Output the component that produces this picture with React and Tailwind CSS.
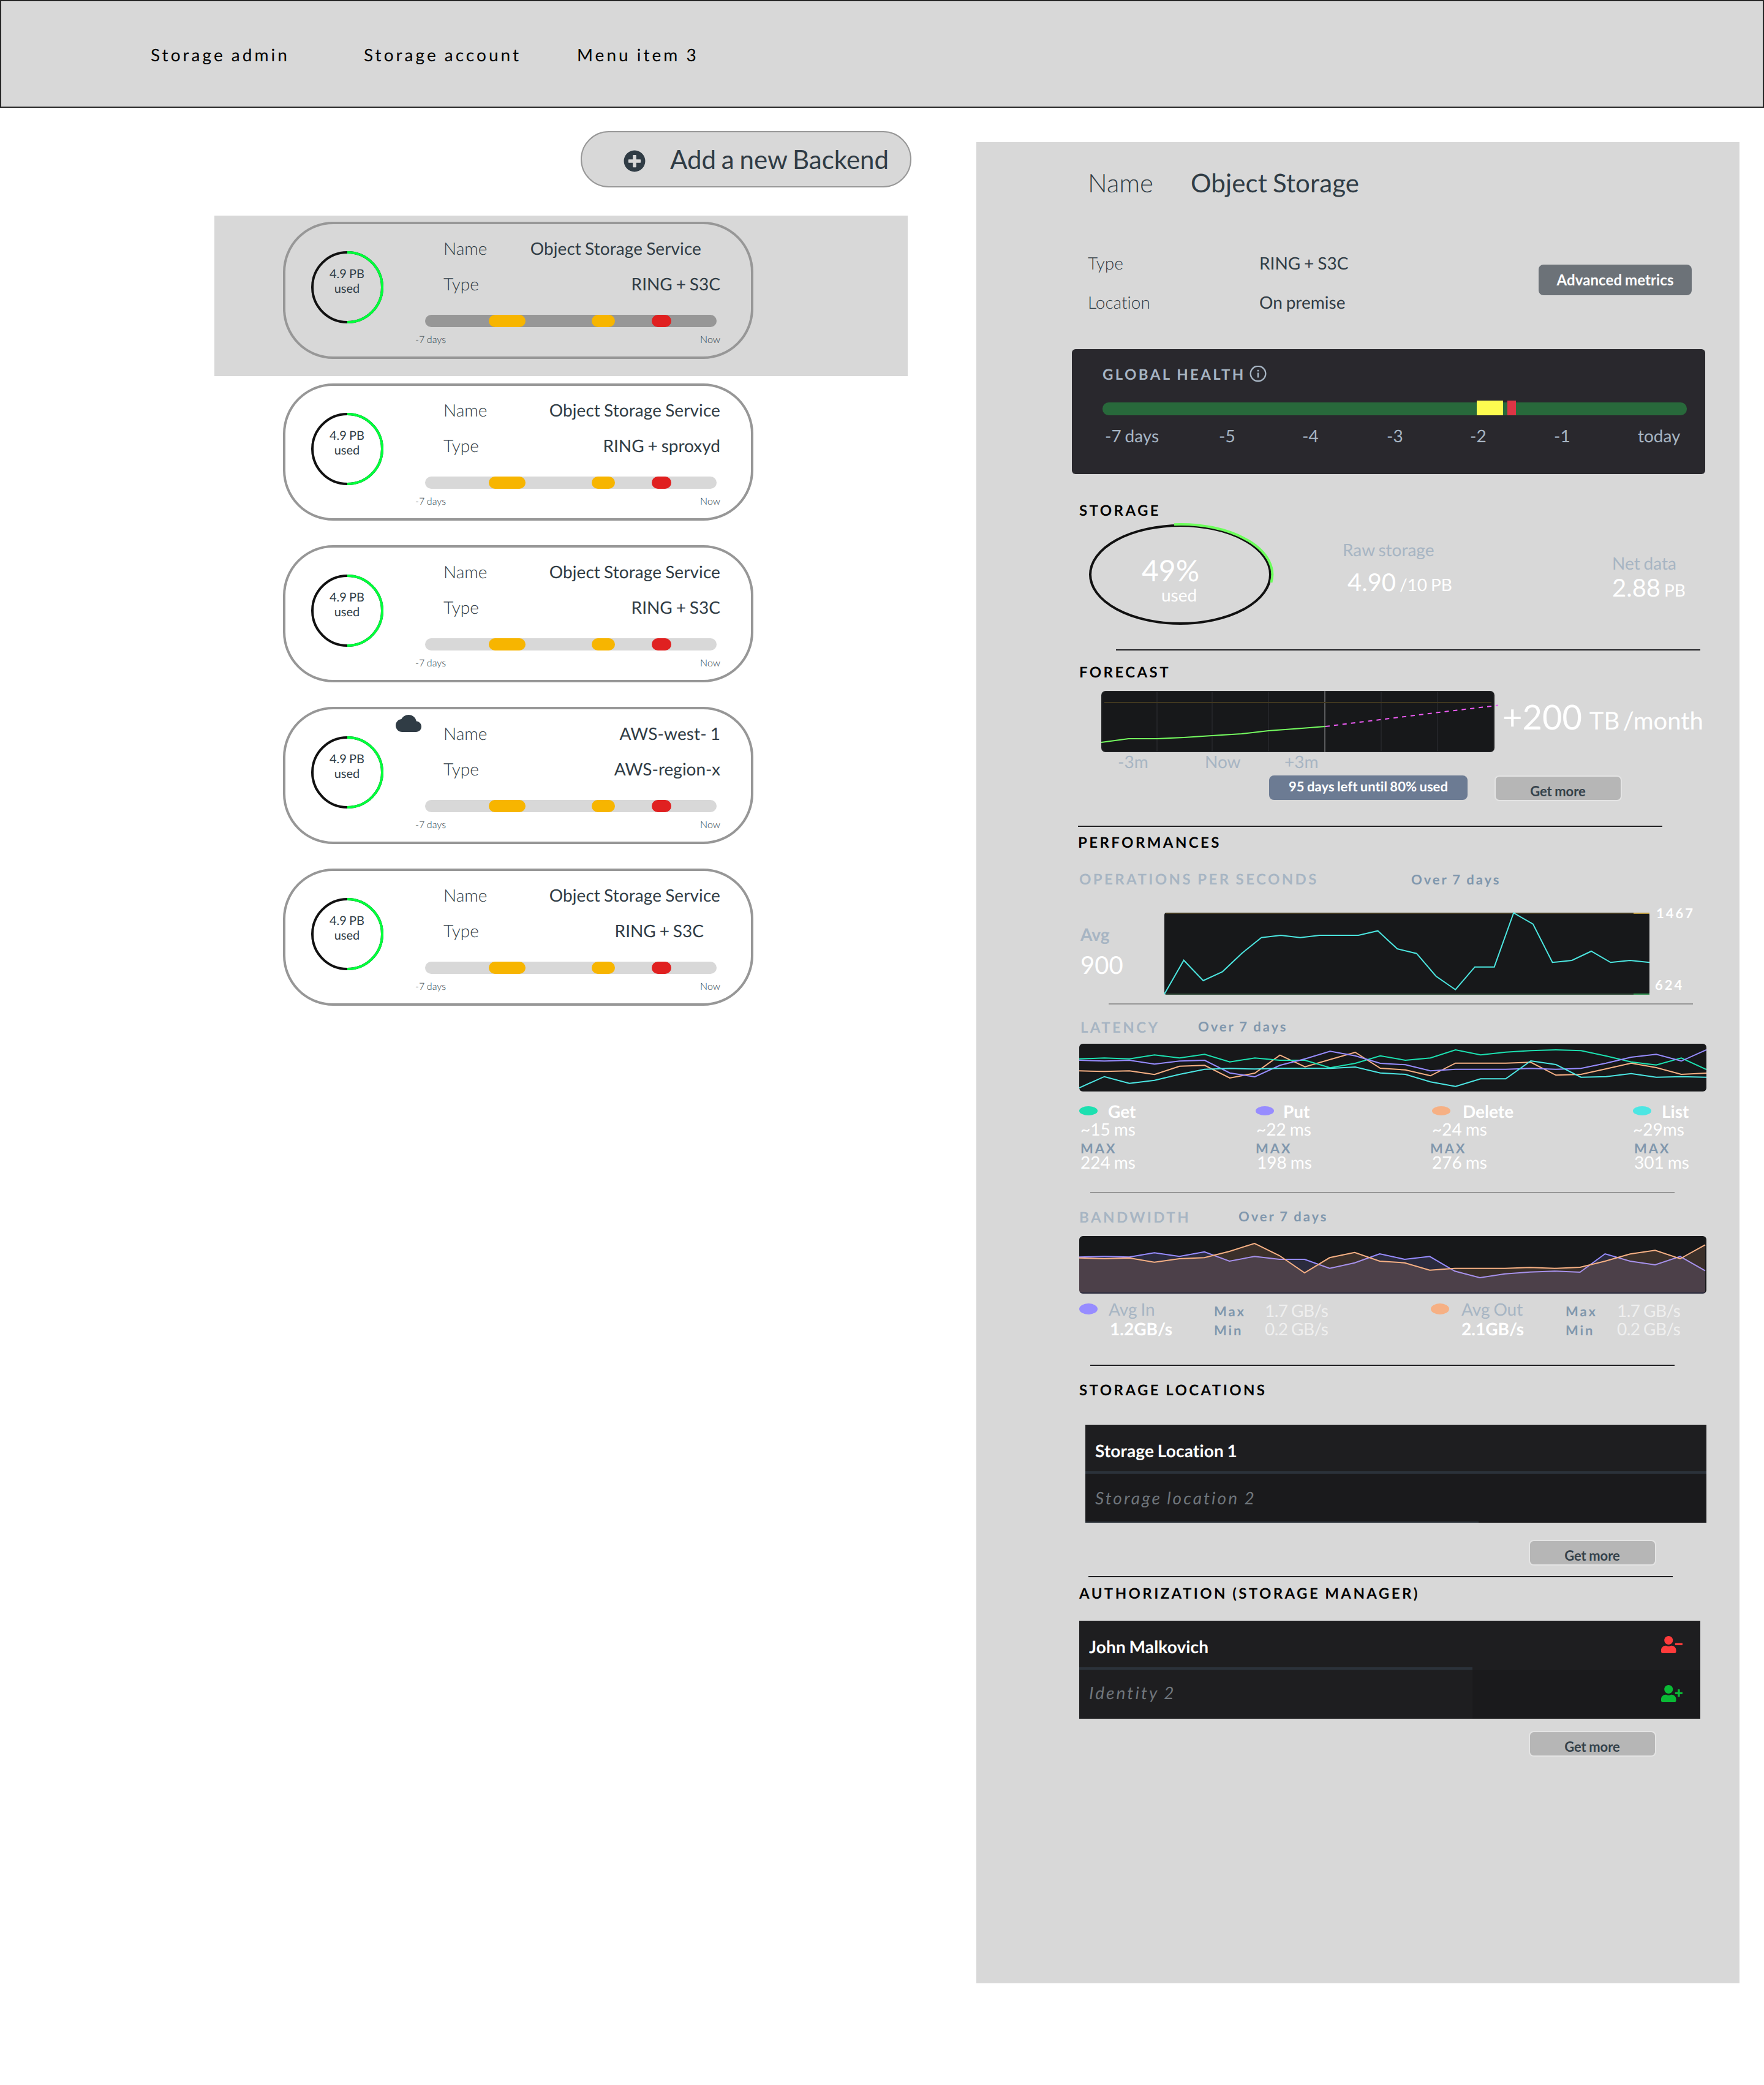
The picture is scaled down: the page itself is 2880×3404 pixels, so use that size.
import React from "react";
import { FaPlusCircle, FaUserMinus, FaUserPlus } from "react-icons/fa";

const cx = (...parts) => parts.filter(Boolean).join(" ");

/* Single line of text, never wraps or shrinks inside a flex row. */
function T({ className, children }) {
  return <div className={cx("shrink-0 whitespace-nowrap [word-spacing:-0.045em]", className)}>{children}</div>;
}

const BODY = "text-[28px] leading-[34px]";
const HEADING = "-mb-[2px] text-[24px] leading-[30px] font-bold tracking-[3.4px] text-black";
const SUBHEADING = "-mb-[2px] text-[24px] leading-[30px] font-bold tracking-[3.4px] text-[#a7b5c3]";
const PERIOD = "text-[22px] leading-[26px] font-bold tracking-[2.9px] text-[#8097ad]";

function Header() {
  return (
    <header className="flex h-[176px] border-2 border-[#262626] bg-[#d8d8d8] pl-[244px] pt-[70px] text-[28px] leading-[34px] tracking-[4.05px] text-black">
      <T className="w-[348px]">Storage admin</T>
      <T className="w-[348px]">Storage account</T>
      <T>Menu item 3</T>
    </header>
  );
}

function UsageRing() {
  return (
    <div className="ml-[40px] mt-[42px] grid h-[122px] w-[122px] shrink-0">
      <svg className="[grid-area:1/1]" width="122" height="122" viewBox="0 0 122 122" fill="none">
        <circle cx="61" cy="61" r="57" stroke="#111111" strokeWidth="4" />
        <path d="M61 4A57 57 0 0 1 61 118" stroke="#00ff3c" strokeWidth="4" />
      </svg>
      <div className="pr-px pt-[27px] text-center text-[20px] leading-[24px] [grid-area:1/1]">
        <T>4.9 PB</T>
        <T>used</T>
      </div>
    </div>
  );
}

function HealthBar({ selected }) {
  const track = selected ? "bg-[#979797]" : "bg-[#d8d8d8]";
  return (
    <div className={cx("flex h-[20px] w-[476px] rounded-[10px]", track)}>
      <div className="ml-[104px] w-[60px] rounded-[10px] bg-[#f7b500]" />
      <div className="ml-[108px] w-[38px] rounded-[10px] bg-[#f7b500]" />
      <div className="ml-[60px] w-[32px] rounded-[10px] bg-[#e02020]" />
    </div>
  );
}

function BackendCard({ name, type, selected, cloud, nameShift, typeShift }) {
  return (
    <div className="flex h-[224px] w-[768px] rounded-[82px] border-4 border-[#979797] text-[#303c45]">
      <UsageRing />
      <div className="flex w-[34px] shrink-0 pl-[18px] pt-[9px]">
        {cloud && (
          <svg className="shrink-0" width="42" height="28" viewBox="0 4 24 16" fill="#303c45">
            <path d="M19.35 10.04C18.67 6.59 15.64 4 12 4 9.11 4 6.6 5.64 5.35 8.04 2.34 8.36 0 10.91 0 14c0 3.31 2.69 6 6 6h13c2.76 0 5-2.24 5-5 0-2.64-2.05-4.78-4.65-4.96z" />
          </svg>
        )}
      </div>
      <div className="ml-[16px] w-[498px] shrink-0 pt-[22px]">
        <div className={cx("flex justify-between pl-[46px]", BODY)}>
          <T className="font-light">Name</T>
          <T className={cx("tracking-[0.1px]", nameShift && "pr-[31px]")}>{name}</T>
        </div>
        <div className={cx("mt-[24px] flex justify-between pl-[46px]", BODY)}>
          <T className="font-light">Type</T>
          <T className={typeShift ? "pr-[27px]" : ""}>{type}</T>
        </div>
        <div className="mt-[34px] pl-[16px]">
          <HealthBar selected={selected} />
        </div>
        <div className="mt-[11px] flex justify-between text-[16px] font-light leading-[20px]">
          <T>-7 days</T>
          <T>Now</T>
        </div>
      </div>
    </div>
  );
}

function BackendList() {
  return (
    <section className="w-[1132px] shrink-0 pt-[38px]">
      <button className="ml-[598px] flex h-[92px] w-[540px] rounded-full border-2 border-[#979797] bg-[#d8d8d8] pt-[20px] text-[42px] leading-[48px] text-[#303c45]">
        <FaPlusCircle className="ml-[68px] mt-[9px] h-[36px] w-[36px] shrink-0" />
        <T className="ml-[40px]">Add a new Backend</T>
      </button>
      <div className="mt-[46px] h-[262px] bg-[#d8d8d8] pl-[112px] pt-[10px]">
        <BackendCard name="Object Storage Service" type="RING + S3C" selected nameShift />
      </div>
      <div className="mt-[12px] flex flex-col gap-[40px] pl-[112px]">
        <BackendCard name="Object Storage Service" type="RING + sproxyd" />
        <BackendCard name="Object Storage Service" type="RING + S3C" />
        <BackendCard name="AWS-west- 1" type="AWS-region-x" cloud />
        <BackendCard name="Object Storage Service" type="RING + S3C" typeShift />
      </div>
    </section>
  );
}

function GetMore({ className }) {
  return (
    <button
      className={cx(
        "flex h-[42px] w-[208px] justify-center rounded-[8px] border-2 border-[#e4e4e4] bg-[#b6b6b6] pr-px pt-[11px] text-[22px] font-bold leading-[26px] text-[#35424b]",
        className
      )}
    >
      <T>Get more</T>
    </button>
  );
}

function Identity() {
  return (
    <>
      <div className="flex pl-[182px] pt-[42px] text-[42px] leading-[48px] text-[#303c45]">
        <T className="w-[168px] font-light">Name</T>
        <T className="tracking-[0.15px]">Object Storage</T>
      </div>
      <div className="mt-[90px] flex h-[98px] pl-[182px] text-[#303c45]">
        <div className={cx("grid w-[736px] shrink-0 grid-cols-[280px_1fr] grid-rows-[34px_34px] gap-y-[30px]", BODY)}>
          <T className="font-light">Type</T>
          <T>RING + S3C</T>
          <T className="font-light">Location</T>
          <T>On premise</T>
        </div>
        <button className="mt-[20px] flex h-[50px] w-[250px] justify-center rounded-[8px] bg-[#6c7278] pt-[11px] text-[24px] font-bold leading-[28px] text-white">
          <T className="tracking-[0.1px]">Advanced metrics</T>
        </button>
      </div>
    </>
  );
}

function GlobalHealth() {
  return (
    <div className="ml-[156px] mt-[60px] h-[204px] w-[1034px] rounded-[6px] bg-[#29282d] pl-[50px] pt-[27px] text-[#a7b5c3]">
      <div className="flex h-[28px]">
        <T className={cx("w-[240px]", SUBHEADING)}>GLOBAL HEALTH</T>
        <svg className="shrink-0" width="28" height="28" viewBox="0 0 28 28" fill="none" stroke="#a7b5c3">
          <circle cx="14" cy="13" r="12.3" strokeWidth="2.4" />
          <path d="M14 11.5v8" strokeWidth="2.4" />
          <path d="M14 6.8v2.6" strokeWidth="2.6" />
        </svg>
      </div>
      <div className="mt-[29px] flex h-[24px] items-end">
        <div className="h-[21px] w-[611px] rounded-l-[10px] bg-[#28693b]" />
        <div className="h-[24px] w-[43px] bg-[#fdfb50]" />
        <div className="h-[21px] w-[7px] bg-[#28693b]" />
        <div className="h-[24px] w-[14px] bg-[#dc3545]" />
        <div className="h-[21px] w-[279px] rounded-r-[10px] bg-[#28693b]" />
      </div>
      <div className={cx("mt-[16px] flex pl-[4px]", BODY)}>
        <T className="w-[186px]">-7 days</T>
        <T className="w-[136px]">-5</T>
        <T className="w-[138px]">-4</T>
        <T className="w-[136px]">-3</T>
        <T className="w-[137px]">-2</T>
        <T className="w-[137px]">-1</T>
        <T>today</T>
      </div>
    </div>
  );
}

function Storage() {
  return (
    <>
      <T className={cx("ml-[168px] mt-[45px]", HEADING)}>STORAGE</T>
      <div className="ml-[182px] mt-[3px] flex h-[172px] text-white">
        <div className="grid w-[306px] shrink-0">
          <svg className="[grid-area:1/1]" width="306" height="172" viewBox="0 0 306 172" fill="none" strokeWidth="4">
            <ellipse cx="151" cy="88" rx="147" ry="80" stroke="#111111" />
            <path d="M141 6.2A149.5 82 0 0 1 299.4 101" stroke="#6dff5c" />
          </svg>
          <div className="pt-[53px] [grid-area:1/1]">
            <T className="pl-[88px] text-[48px] leading-[58px]">49%</T>
            <T className={cx("-mt-[7px] pl-[120px]", BODY)}>used</T>
          </div>
        </div>
        <div className="ml-[110px] w-[440px] shrink-0 pt-[30px]">
          <T className={cx("text-[#a7b5c3]", BODY)}>Raw storage</T>
          <T className="ml-[8px] mt-[12px] text-[40px] leading-[48px]">
            4.90<span className="text-[28px] [word-spacing:-0.045em]"> /10 PB</span>
          </T>
        </div>
        <div className="pt-[52px]">
          <T className={cx("text-[#a7b5c3]", BODY)}>Net data</T>
          <T className="-mt-px text-[40px] leading-[48px]">
            2.88<span className="text-[28px] [word-spacing:-0.045em]"> PB</span>
          </T>
        </div>
      </div>
      <div className="ml-[228px] mt-[38px] h-[2px] w-[954px] bg-[#202023]" />
    </>
  );
}

function Forecast() {
  return (
    <>
      <T className={cx("ml-[168px] mt-[21px]", HEADING)}>FORECAST</T>
      <div className="ml-[204px] mt-[17px] flex h-[100px]">
        <svg className="shrink-0 overflow-visible" width="642" height="100" viewBox="0 0 642 100" fill="none">
          <rect x="1" y="1" width="640" height="98" rx="6" fill="#17181a" stroke="#1f2022" strokeWidth="2" />
          <path d="M91 1v98M181 1v98M273 1v98M457 1v98M549 1v98" stroke="#232427" strokeWidth="2" />
          <path d="M365 0v100" stroke="#5b5c5e" strokeWidth="2" />
          <path d="M5 19H637" stroke="#40371f" strokeWidth="2" />
          <path d="M0 84 44.6 78 91 78 135 76 181 73 229 70 273 65 321 61.5 366 58" stroke="#75fb60" strokeWidth="2" />
          <path d="M366 58 457 46.7 549 35.3 648 23.6" stroke="#ee5cf5" strokeWidth="2" strokeDasharray="7 7" />
        </svg>
        <T className="ml-[13px] pt-[8px] text-[56px] leading-[68px] text-white">
          +200<span className="text-[40px] [word-spacing:0.07em]"> TB</span>
          <span className="text-[40px] [word-spacing:-0.12em]"> /month</span>
        </T>
      </div>
      <div className={cx("-mt-[2px] ml-[231px] flex text-[#a7b5c3]", BODY)}>
        <T className="w-[142px]">-3m</T>
        <T className="w-[130px]">Now</T>
        <T>+3m</T>
      </div>
      <div className="ml-[478px] mt-[6px] flex h-[42px]">
        <div className="flex h-[40px] w-[324px] justify-center rounded-[8px] bg-[#6c7b93] pt-[5px] text-[22px] font-bold leading-[26px] text-white">
          <T className="tracking-[0.05px]">95 days left until 80% used</T>
        </div>
        <GetMore className="ml-[44px]" />
      </div>
      <div className="ml-[166px] mt-[40px] h-[2px] w-[954px] bg-[#202023]" />
    </>
  );
}

const toPoints = (values, width) =>
  values.map((v, i) => `${((i * width) / (values.length - 1)).toFixed(1)},${v}`).join(" ");

const OPS = [
  133, 77.7, 111, 96.3, 66.3, 40.7, 37, 40.7, 37, 37, 37, 29.7, 59, 66.7, 103.7, 125.7, 88.7, 88.7, 0.5, 18.7, 81.3, 78,
  63, 81.3, 78, 81.3,
];

function Operations() {
  return (
    <>
      <T className={cx("ml-[166px] mt-[11px]", HEADING)}>PERFORMANCES</T>
      <div className="ml-[168px] mt-[32px] flex h-[28px]">
        <T className={cx("w-[542px]", SUBHEADING)}>OPERATIONS PER SECONDS</T>
        <T className={cx("pt-[2px]", PERIOD)}>Over 7 days</T>
      </div>
      <div className="ml-[170px] mt-[41px] flex h-[134px]">
        <div className="w-[137px] shrink-0 pt-[18px]">
          <T className={cx("font-bold text-[#a7b5c3]", BODY)}>Avg</T>
          <T className="mt-[9px] text-[40px] leading-[48px] text-white">900</T>
        </div>
        <svg className="shrink-0 overflow-visible" width="792" height="134" viewBox="0 0 792 134" fill="none">
          <rect width="792" height="134" rx="4" fill="#17181a" />
          <path d="M2 1H766" stroke="#40371f" strokeWidth="2" />
          <path d="M766 1H792" stroke="#b8963a" strokeWidth="2" />
          <path d="M2 133H766" stroke="#2c4434" strokeWidth="2" />
          <path d="M766 133H792" stroke="#2f8f4e" strokeWidth="2" />
          <polyline points={toPoints(OPS, 792)} stroke="#4ce6e0" strokeWidth="2" />
        </svg>
        <div className="-mt-[12px] ml-[9px] text-[22px] font-bold leading-[26px] tracking-[3px] text-white">
          <T className="ml-[2px]">1467</T>
          <T className="mt-[91px]">624</T>
        </div>
      </div>
      <div className="ml-[216px] mt-[14px] h-[2px] w-[954px] bg-[#979797]" />
    </>
  );
}

const LATENCY_LINES = [
  {
    stroke: "#f6b084",
    values: [325, 328, 325, 343, 302, 298, 360, 336, 248, 305, 269, 234, 312, 320, 349, 287, 287, 287, 283, 346, 342, 315, 287, 309, 342, 336],
  },
  {
    stroke: "#1ce0b0",
    values: [266, 262, 266, 247, 262, 244, 281, 262, 273, 273, 310, 288, 251, 273, 262, 222, 247, 233, 226, 222, 226, 252, 281, 296, 262, 318],
  },
  {
    stroke: "#978cff",
    values: [273, 277, 273, 292, 277, 273, 335, 354, 298, 266, 229, 251, 288, 295, 325, 317, 317, 317, 313, 317, 313, 287, 258, 244, 277, 222],
  },
  {
    stroke: "#4ce6e3",
    values: [408, 353, 386, 371, 342, 317, 313, 316, 313, 313, 313, 306, 335, 342, 379, 401, 364, 364, 276, 294, 356, 353, 338, 356, 353, 356],
  },
].map((line) => ({ ...line, values: line.values.map((v) => +((v - 192) / 3).toFixed(1)) }));

const LATENCY_STATS = [
  { col: "w-[288px]", dot: "bg-[#1ce0b0]", label: "Get", labelPos: "ml-[17px]", avg: "~15 ms", avgPos: "ml-[2px]", maxPos: "ml-[2px]", max: "224 ms", valPos: "ml-[2px]" },
  { col: "w-[288px]", dot: "bg-[#978cff]", label: "Put", labelPos: "ml-[15px]", avg: "~22 ms", avgPos: "ml-px", maxPos: "", max: "198 ms", valPos: "ml-[2px]" },
  { col: "w-[328px]", dot: "bg-[#f6b084]", label: "Delete", labelPos: "ml-[20px]", avg: "~24 ms", avgPos: "", maxPos: "-ml-[3px]", max: "276 ms", valPos: "" },
  { col: "w-[120px]", dot: "bg-[#4ce6e3]", label: "List", labelPos: "ml-[17px]", avg: "~29ms", avgPos: "", maxPos: "ml-[2px]", max: "301 ms", valPos: "ml-[2px]" },
];

function Latency() {
  return (
    <>
      <div className="ml-[170px] mt-[23px] flex h-[28px]">
        <T className={cx("w-[192px]", SUBHEADING)}>LATENCY</T>
        <T className={PERIOD}>Over 7 days</T>
      </div>
      <svg className="ml-[168px] mt-[13px] rounded-[6px]" width="1024" height="78" viewBox="0 0 1024 78" fill="none">
        <rect width="1024" height="78" fill="#17181a" />
        {LATENCY_LINES.map((line) => (
          <polyline key={line.stroke} points={toPoints(line.values, 1024)} stroke={line.stroke} strokeWidth="2" />
        ))}
      </svg>
      <div className="ml-[168px] mt-[15px] flex h-[117px] text-white">
        {LATENCY_STATS.map((s) => (
          <div key={s.label} className={cx("shrink-0", s.col)}>
            <div className="flex">
              <div className={cx("mt-[9px] h-[15px] w-[30px] shrink-0 rounded-[50%]", s.dot)} />
              <T className={cx("font-bold", BODY, s.labelPos)}>{s.label}</T>
            </div>
            <T className={cx("-mt-[5px]", BODY, s.avgPos)}>{s.avg}</T>
            <T className={cx("mt-[2px]", PERIOD, s.maxPos)}>MAX</T>
            <T className={cx("-mt-[8px]", BODY, s.valPos)}>{s.max}</T>
          </div>
        ))}
      </div>
      <div className="ml-[186px] mt-[32px] h-[2px] w-[954px] bg-[#979797]" />
    </>
  );
}

const scaleBandwidth = (values) => values.map((v) => +((v - 204) / 3).toFixed(1));
const BW_IN = scaleBandwidth([
  307, 304, 307, 286, 304, 281, 327, 304, 318, 318, 362, 335, 291, 318, 304, 376, 408, 389, 380, 376, 381, 291, 327, 345, 304, 374,
]);
const BW_OUT = scaleBandwidth([
  311, 315, 311, 332, 315, 310, 279, 240, 300, 384, 310, 284, 327, 335, 371, 362, 362, 362, 358, 362, 357, 327, 292, 274, 315, 247,
]);

function Bandwidth() {
  const inPts = toPoints(BW_IN, 1022);
  const outPts = toPoints(BW_OUT, 1022);
  return (
    <>
      <div className="ml-[168px] mt-[25px] flex h-[28px]">
        <T className={cx("w-[260px]", SUBHEADING)}>BANDWIDTH</T>
        <T className={PERIOD}>Over 7 days</T>
      </div>
      <svg className="ml-[168px] mt-[17px] rounded-[6px]" width="1024" height="94" viewBox="0 0 1024 94" fill="none">
        <rect width="1024" height="94" fill="#17181a" />
        <polygon points={`${inPts} 1022,94 0,94`} fill="#978cff" fillOpacity="0.16" />
        <polyline points={inPts} stroke="#978cff" strokeWidth="2" />
        <polygon points={`${outPts} 1022,92 0,92`} fill="#f6b084" fillOpacity="0.16" />
        <polyline points={outPts} stroke="#f6b084" strokeWidth="2" />
      </svg>
      <div className="ml-[168px] mt-[8px] flex h-[66px]">
        <div className="mt-[8px] h-[18px] w-[30px] shrink-0 rounded-[50%] bg-[#978cff]" />
        <div className="ml-[18px] w-[172px] shrink-0">
          <T className={cx("text-[#a7b5c3]", BODY)}>Avg In</T>
          <T className={cx("-mt-[2px] ml-[2px] font-bold text-white", BODY)}>1.2GB/s</T>
        </div>
        <div className="w-[83px] shrink-0 pt-[8px]">
          <T className={PERIOD}>Max</T>
          <T className={cx("mt-[5px]", PERIOD)}>Min</T>
        </div>
        <div className="w-[271px] shrink-0 pt-[2px] tracking-[-0.5px] text-[#efefef]">
          <T className={BODY}>1.7 GB/s</T>
          <T className={cx("-mt-[4px]", BODY)}>0.2 GB/s</T>
        </div>
        <div className="mt-[8px] h-[18px] w-[30px] shrink-0 rounded-[50%] bg-[#f6b084]" />
        <div className="ml-[20px] w-[170px] shrink-0">
          <T className={cx("text-[#a7b5c3]", BODY)}>Avg Out</T>
          <T className={cx("-mt-[2px] font-bold text-white", BODY)}>2.1GB/s</T>
        </div>
        <div className="w-[84px] shrink-0 pt-[8px]">
          <T className={PERIOD}>Max</T>
          <T className={cx("mt-[5px]", PERIOD)}>Min</T>
        </div>
        <div className="pt-[2px] tracking-[-0.5px] text-[#efefef]">
          <T className={BODY}>1.7 GB/s</T>
          <T className={cx("-mt-[4px]", BODY)}>0.2 GB/s</T>
        </div>
      </div>
      <div className="ml-[186px] mt-[42px] h-[2px] w-[954px] bg-[#202023]" />
    </>
  );
}

function Locations() {
  return (
    <>
      <T className={cx("ml-[168px] mt-[25px]", HEADING)}>STORAGE LOCATIONS</T>
      <div className="ml-[178px] mt-[43px] w-[1014px]">
        <div className="h-[80px] border-b-4 border-[#2b323a] bg-[#1e1e20] pl-[16px] pt-[25px]">
          <T className={cx("font-bold tracking-[0.15px] text-white", BODY)}>Storage Location 1</T>
        </div>
        <div className="flex h-[80px] flex-col justify-between bg-[#1a1a1c] pt-[22px]">
          <T className={cx("pl-[16px] italic tracking-[3.05px] text-[#6f757b]", BODY)}>Storage location 2</T>
          <div className="h-[2px] w-[642px] bg-[#2b323a]" />
        </div>
      </div>
      <GetMore className="ml-[902px] mt-[28px]" />
      <div className="ml-[183px] mt-[17px] h-[2px] w-[954px] bg-[#202023]" />
    </>
  );
}

function Authorization() {
  return (
    <>
      <T className={cx("ml-[168px] mt-[12px]", HEADING)}>AUTHORIZATION (STORAGE MANAGER)</T>
      <div className="ml-[168px] mt-[31px] w-[1014px]">
        <div className="flex h-[80px] bg-[#1e1e20]">
          <div className="w-[642px] border-b-4 border-[#2b323a] pl-[16px] pt-[25px]">
            <T className={cx("font-bold tracking-[0.15px] text-white", BODY)}>John Malkovich</T>
          </div>
          <FaUserMinus className="ml-[308px] mt-[25px] h-[28px] w-[35px] text-[#ff3b3b]" />
        </div>
        <div className="flex h-[80px] bg-[#1a1a1c]">
          <div className="w-[642px] bg-[#1e1e20] pl-[16px] pt-[20px]">
            <T className={cx("italic tracking-[3.1px] text-[#6f757b]", BODY)}>Identity 2</T>
          </div>
          <FaUserPlus className="ml-[308px] mt-[25px] h-[28px] w-[35px] text-[#0aba35]" />
        </div>
      </div>
      <GetMore className="ml-[902px] mt-[20px]" />
    </>
  );
}

export default function App() {
  return (
    <div className="h-[3404px] w-[2880px] bg-white font-['Lato',sans-serif] [font-variant-ligatures:none] [text-rendering:geometricPrecision]">
      <Header />
      <main className="flex pl-[350px]">
        <BackendList />
        <aside className="ml-[112px] mt-[56px] flex h-[3006px] w-[1246px] shrink-0 flex-col items-start bg-[#d8d8d8]">
          <Identity />
          <GlobalHealth />
          <Storage />
          <Forecast />
          <Operations />
          <Latency />
          <Bandwidth />
          <Locations />
          <Authorization />
        </aside>
      </main>
    </div>
  );
}
